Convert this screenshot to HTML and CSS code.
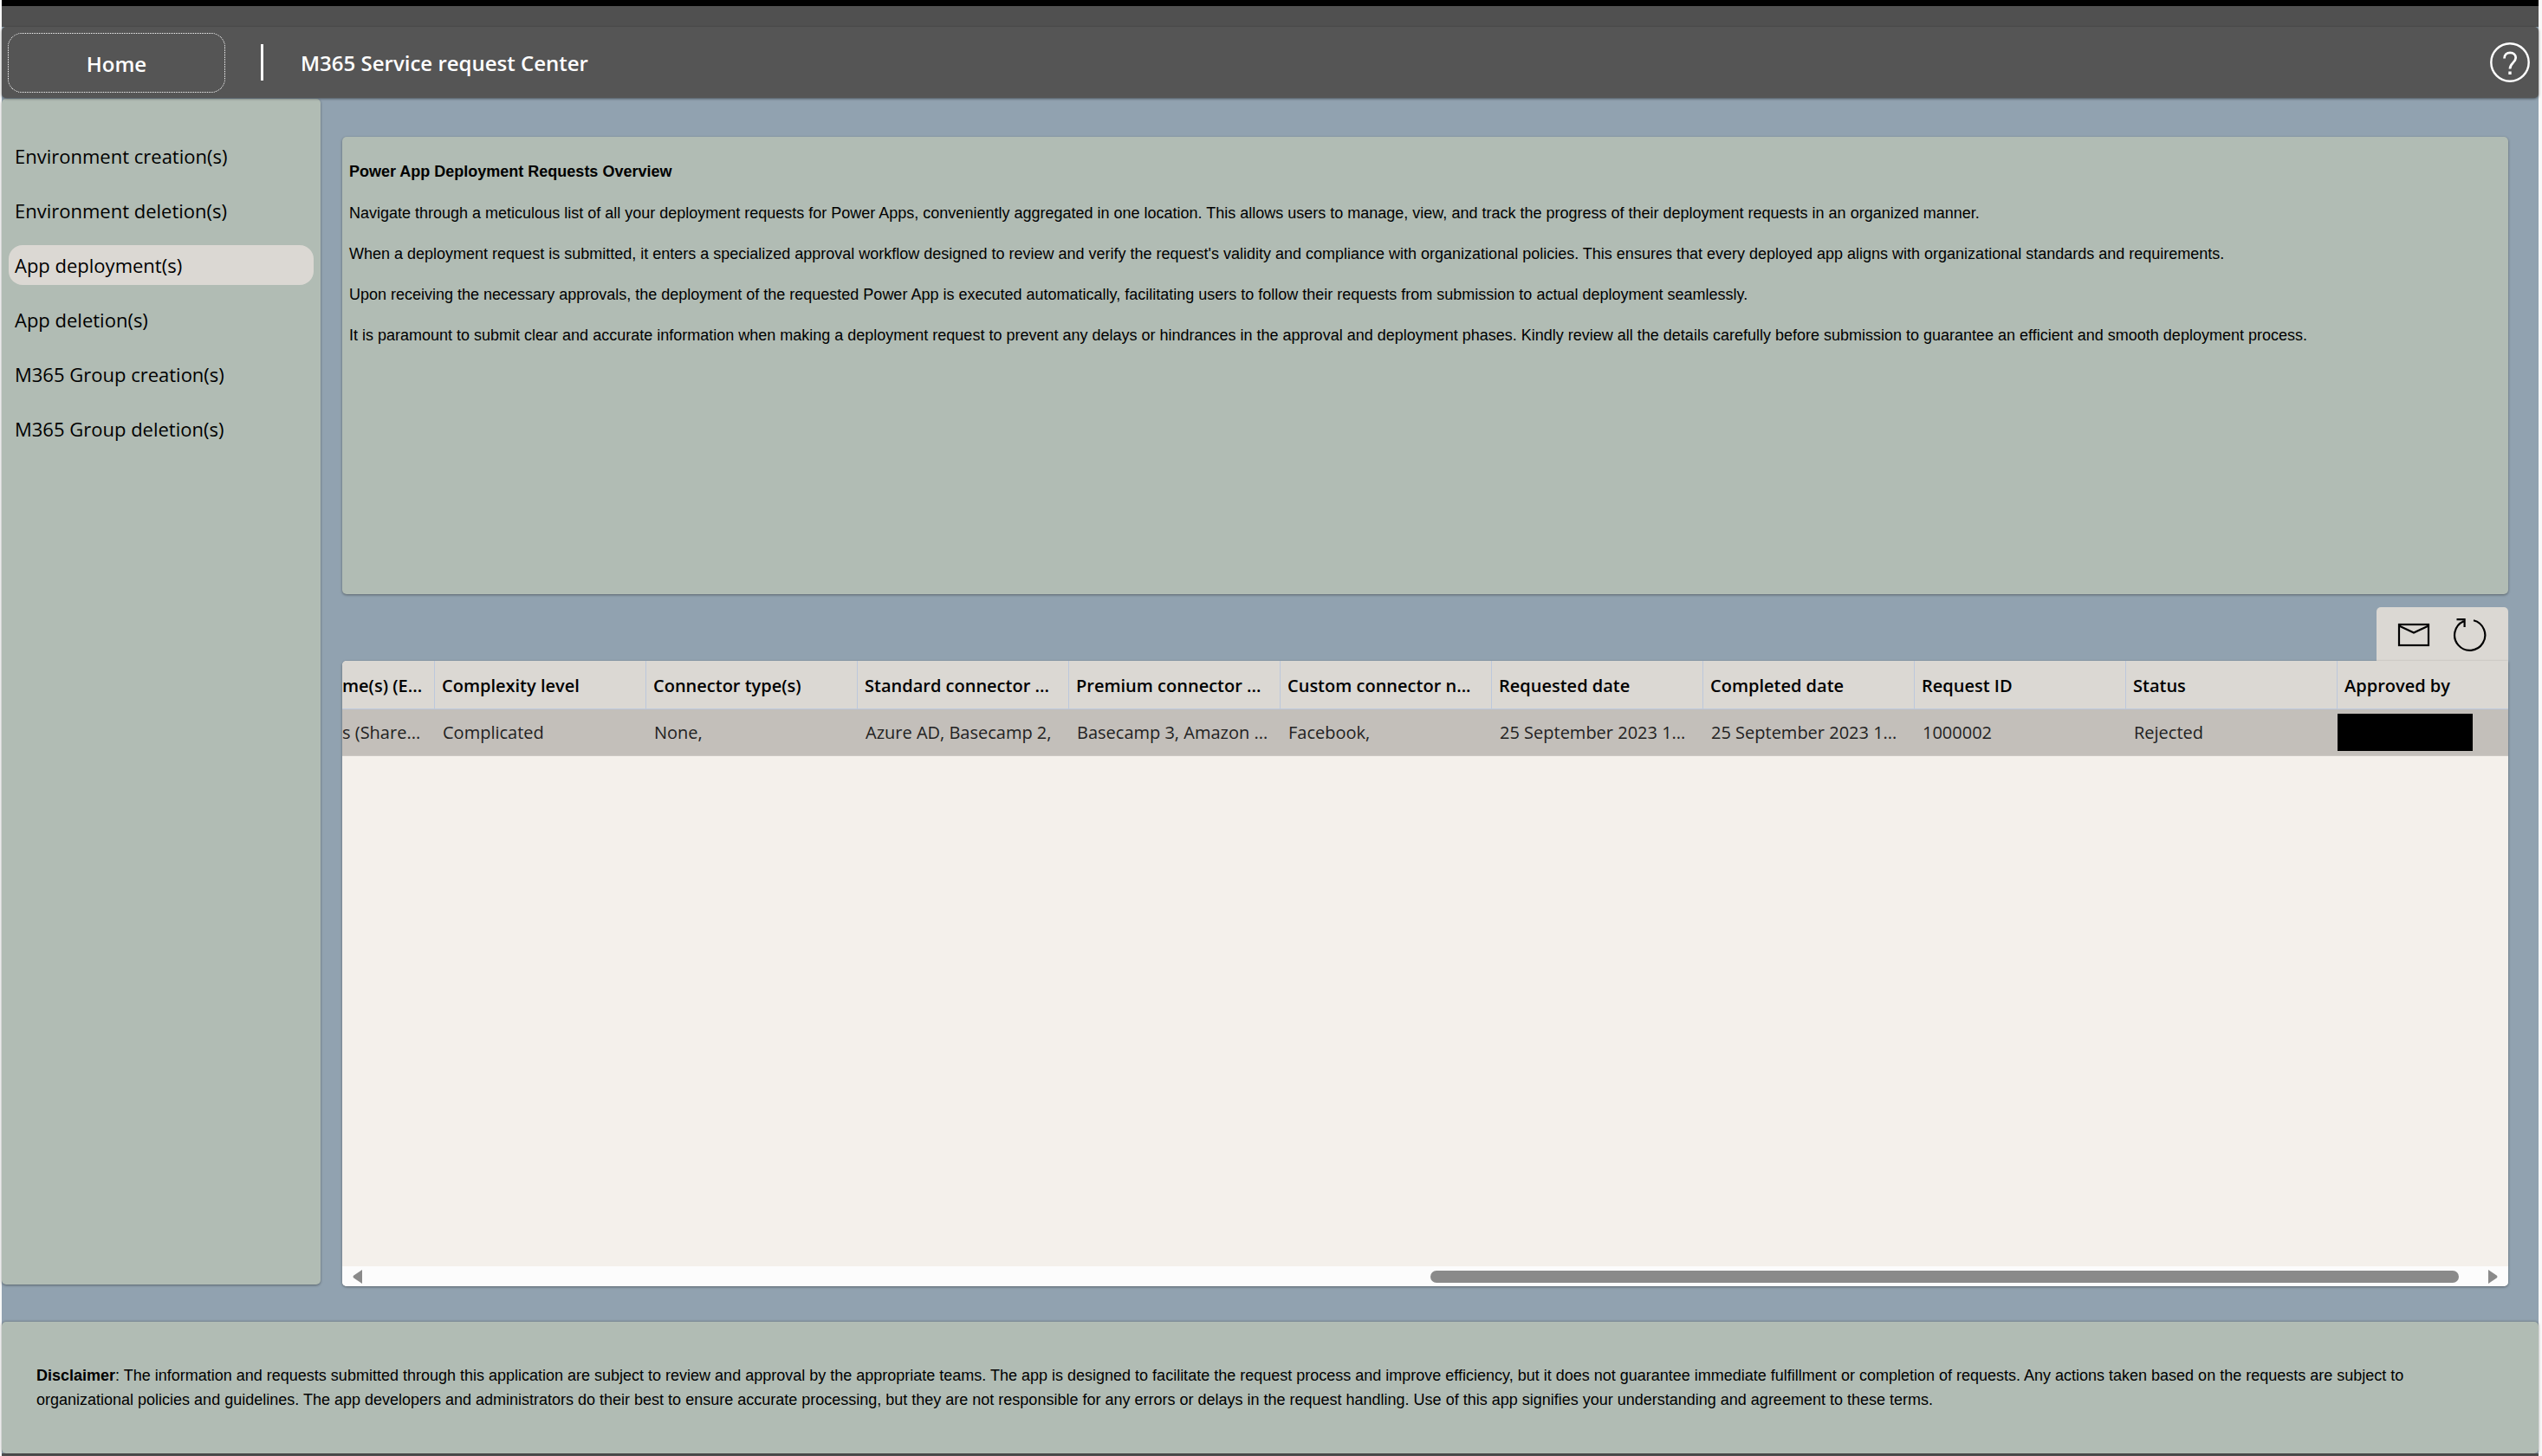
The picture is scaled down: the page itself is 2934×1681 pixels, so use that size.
FILE: index.html
```html
<!DOCTYPE html>
<html lang="en">
<head>
<meta charset="utf-8">
<title>M365 Service request Center</title>
<link rel="stylesheet" href="styles.css">
</head>
<body>
<div class="app">
  <div class="topline"></div>
  <div class="topbar"></div>
  <header class="header">
    <button class="home" type="button">Home</button>
    <span class="divider"></span>
    <h1 class="title">M365 Service request Center</h1>
    <button class="help" type="button" aria-label="Help">
      <svg width="46" height="46" viewBox="0 0 46 46" fill="none" stroke="#fff">
        <circle cx="23" cy="23" r="21.7" stroke-width="2.4"/>
        <path d="M16.5 18.5C16.5 14 19.5 11.8 23.2 11.8C27 11.8 29.7 14.2 29.7 17.8C29.7 23 23 24 23 30.5" stroke-width="2.7"/>
        <path d="M23 33.5V37" stroke-width="3.4"/>
      </svg>
    </button>
  </header>
  <div class="main">
    <nav class="sidebar">
      <a class="nav-item" href="#">Environment creation(s)</a>
      <a class="nav-item" href="#">Environment deletion(s)</a>
      <a class="nav-item active" href="#" aria-current="page">App deployment(s)</a>
      <a class="nav-item" href="#">App deletion(s)</a>
      <a class="nav-item" href="#">M365 Group creation(s)</a>
      <a class="nav-item" href="#">M365 Group deletion(s)</a>
    </nav>
    <main class="content">
      <section class="overview">
        <h2>Power App Deployment Requests Overview</h2>
        <p>Navigate through a meticulous list of all your deployment requests for Power Apps, conveniently aggregated in one location. This allows users to manage, view, and track the progress of their deployment requests in an organized manner.</p>
        <p>When a deployment request is submitted, it enters a specialized approval workflow designed to review and verify the request's validity and compliance with organizational policies. This ensures that every deployed app aligns with organizational standards and requirements.</p>
        <p>Upon receiving the necessary approvals, the deployment of the requested Power App is executed automatically, facilitating users to follow their requests from submission to actual deployment seamlessly.</p>
        <p>It is paramount to submit clear and accurate information when making a deployment request to prevent any delays or hindrances in the approval and deployment phases. Kindly review all the details carefully before submission to guarantee an efficient and smooth deployment process.</p>
      </section>
      <div class="tools">
        <button type="button" aria-label="Send mail">
          <svg width="38" height="28" viewBox="0 0 38 28" fill="none" stroke="#000" stroke-width="2.2">
            <rect x="2" y="2" width="34" height="24"/>
            <path d="M2 3.5L19 11.5L36 3.5"/>
          </svg>
        </button>
        <button type="button" aria-label="Refresh">
          <svg width="40" height="40" viewBox="0 0 40 40" fill="none" stroke="#000" stroke-width="2.2">
            <path d="M25 3.2A17.6 17.6 0 1 1 13.5 4.2M5.5 2.2H14.6V11"/>
          </svg>
        </button>
      </div>
      <section class="grid">
        <div class="grid-view">
          <table>
            <thead>
              <tr>
                <th class="cut">me(s) (E...</th><th>Complexity level</th><th>Connector type(s)</th><th>Standard connector ...</th><th>Premium connector ...</th><th>Custom connector n...</th><th>Requested date</th><th>Completed date</th><th>Request ID</th><th>Status</th><th class="last">Approved by</th>
              </tr>
            </thead>
            <tbody>
              <tr>
                <td class="cut">s (Share...</td><td>Complicated</td><td>None,</td><td>Azure AD, Basecamp 2,</td><td>Basecamp 3, Amazon ...</td><td>Facebook,</td><td>25 September 2023 1...</td><td>25 September 2023 1...</td><td>1000002</td><td>Rejected</td><td class="last"><span class="redacted"></span></td>
              </tr>
            </tbody>
          </table>
        </div>
        <div class="scrollbar">
          <button type="button" aria-label="Scroll left"><svg width="12" height="16" viewBox="0 0 12 16"><path d="M11 0V16L1 9.300Q0 8 1 6.700Z" fill="#8a8a8a"/></svg></button>
          <div class="track"><div class="thumb" style="width:49.3%"></div></div>
          <button type="button" aria-label="Scroll right"><svg width="12" height="16" viewBox="0 0 12 16"><path d="M1 0V16L11 9.300Q12 8 11 6.700Z" fill="#8a8a8a"/></svg></button>
        </div>
      </section>
    </main>
  </div>
  <footer class="footer">
    <p><strong>Disclaimer</strong>: The information and requests submitted through this application are subject to review and approval by the appropriate teams. The app is designed to facilitate the request process and improve efficiency, but it does not guarantee immediate fulfillment or completion of requests. Any actions taken based on the requests are subject to organizational policies and guidelines. The app developers and administrators do their best to ensure accurate processing, but they are not responsible for any errors or delays in the request handling. Use of this app signifies your understanding and agreement to these terms.</p>
  </footer>
</div>
</body>
</html>
```
FILE: styles.css
```css
* { box-sizing: border-box; }

body {
  margin: 0;
  padding: 0 4px 0 2px;
  background: #f8f8f8;
  color: #000;
  font-family: "Open Sans", sans-serif;
}

button {
  margin: 0;
  padding: 0;
  border: 0;
  background: none;
  color: inherit;
  font: inherit;
}

svg { display: block; }

.app {
  display: flex;
  flex-direction: column;
  min-height: 100vh;
  background: #91a2b0;
  border-bottom: 3px solid #4f4f4f;
}

.topline { height: 7px; background: #000; }
.topbar { height: 24px; background: #505050; }

.header {
  position: relative;
  display: flex;
  align-items: center;
  height: 82px;
  padding: 0 10px 0 7px;
  border-radius: 5px;
  background: #555;
  color: #fff;
  box-shadow: 0 1px 3px rgba(0, 0, 0, 0.5);
}

.home {
  width: 251px;
  height: 69px;
  padding-top: 2px;
  border: 1px dotted #fff;
  border-radius: 16px;
  font-size: 24px;
  font-weight: 600;
}

.divider {
  width: 3px;
  height: 42px;
  margin: 0 43px 0 41px;
  background: #fff;
}

.title {
  margin: 0;
  padding-top: 2px;
  font-size: 24px;
  font-weight: 600;
  line-height: 32px;
}

.help { margin-left: auto; }

.main {
  display: flex;
  flex: 1;
  gap: 25px;
  padding: 1px 35px 41px 0;
}

.sidebar {
  display: flex;
  flex-direction: column;
  gap: 17px;
  width: 368px;
  margin-bottom: 2px;
  padding: 43px 8px;
  border-radius: 5px;
  background: #b1bcb4;
  box-shadow: 0 1px 3px rgba(0, 0, 0, 0.4);
}

.nav-item {
  height: 46px;
  padding: 0 7px;
  border-radius: 16px;
  color: #000;
  font-size: 22px;
  line-height: 46px;
  text-decoration: none;
}

.nav-item.active { background: #dbd8d3; }

.content {
  display: flex;
  flex: 1;
  flex-direction: column;
  min-width: 0;
  padding-top: 44px;
}

.overview {
  flex: 472 1 0;
  margin-bottom: 15px;
  padding: 28px 8px;
  border-radius: 5px;
  background: #b1bcb4;
  box-shadow: 0 1px 3px rgba(0, 0, 0, 0.4);
  font: 18px/24px "Liberation Sans", Arial, sans-serif;
}

.overview h2 {
  margin: 0 0 24px;
  font-size: 18px;
  line-height: 24px;
}

.overview p { margin: 0 0 23px; }

.tools {
  display: flex;
  align-items: center;
  align-self: flex-end;
  gap: 25px;
  height: 62px;
  padding: 2px 25px 0 24px;
  border-radius: 5px 5px 0 0;
  background: #dbd8d3;
}

.grid {
  display: flex;
  flex: 722 1 0;
  flex-direction: column;
  overflow: hidden;
  border-radius: 5px 0 5px 5px;
  background: #f4f0eb;
  box-shadow: 0 1px 3px rgba(0, 0, 0, 0.4);
}

.grid-view { flex: 1; }

table {
  width: 100%;
  border-collapse: separate;
  border-spacing: 0;
  table-layout: fixed;
}

th, td {
  overflow: hidden;
  padding: 0 0 0 8px;
  font-size: 20px;
  text-align: left;
  white-space: nowrap;
}

th {
  height: 56px;
  padding-top: 2px;
  border-right: 1px solid #bcc8dc;
  border-bottom: 1px solid #bcc8dc;
  background: #dbd8d3;
  font-weight: 600;
}

td {
  height: 54px;
  padding-left: 9px;
  background: #c3bfba;
  color: #222;
  border-bottom: 1px solid #cbc7c2;
}

.cut { width: 107px; padding-left: 0; }

th.last { width: 197px; border-right: 0; }
td.last { padding: 0; }

.redacted {
  display: block;
  width: 156px;
  height: 43px;
  background: #000;
}

.scrollbar {
  display: flex;
  align-items: center;
  justify-content: space-between;
  height: 23px;
  padding: 0 12px;
  background: #fcfcfc;
}

.track {
  display: flex;
  flex: 1;
  justify-content: flex-end;
  margin: 0 33px 0 12px;
}

.thumb {
  height: 14px;
  border-radius: 7px;
  background: #8a8a8a;
}

.footer {
  padding: 46px 40px;
  border-radius: 5px;
  background: #b1bcb4;
  box-shadow: 0 0 3px rgba(0, 0, 0, 0.4);
  font: 18px/28px "Liberation Sans", Arial, sans-serif;
}

.footer p { margin: 0; padding: 2px 0; }
```
